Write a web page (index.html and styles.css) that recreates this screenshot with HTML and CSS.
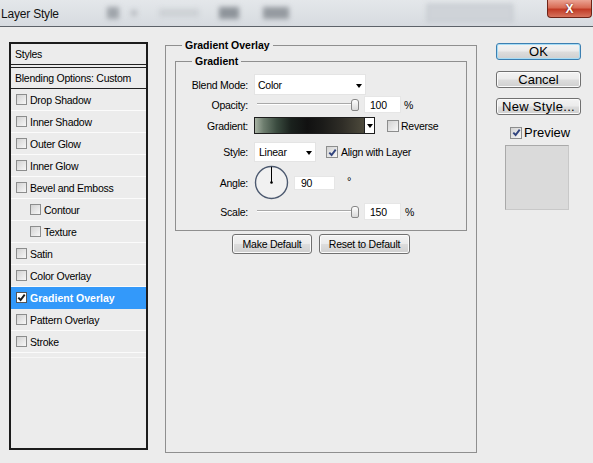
FILE: index.html
```html
<!DOCTYPE html>
<html>
<head>
<meta charset="utf-8">
<title>Layer Style</title>
<link rel="stylesheet" href="styles.css">
</head>
<body>
<div class="titlebar">
  <span class="title">Layer Style</span>
  <div class="ghost">
    <span class="g g1"></span>
    <span class="g g2"></span>
    <span class="g g3"></span>
    <span class="g g4"></span>
    <span class="g g5"></span>
    <span class="g g6"></span>
  </div>
  <div class="close">X</div>
</div>

<div class="dialog">
  <div class="styles">
    <div class="s-head">Styles</div>
    <div class="s-blend">Blending Options: Custom</div>
    <div class="item"><span class="cb"></span>Drop Shadow</div>
    <div class="item"><span class="cb"></span>Inner Shadow</div>
    <div class="item"><span class="cb"></span>Outer Glow</div>
    <div class="item"><span class="cb"></span>Inner Glow</div>
    <div class="item"><span class="cb"></span>Bevel and Emboss</div>
    <div class="item sub"><span class="cb"></span>Contour</div>
    <div class="item sub"><span class="cb"></span>Texture</div>
    <div class="item"><span class="cb"></span>Satin</div>
    <div class="item"><span class="cb"></span>Color Overlay</div>
    <div class="item sel"><span class="cb on"><svg viewBox="0 0 9 9"><path d="M1.3 4.6 L3.6 7 L7.7 1.6" /></svg></span>Gradient Overlay</div>
    <div class="item"><span class="cb"></span>Pattern Overlay</div>
    <div class="item"><span class="cb"></span>Stroke</div>
    <div class="item empty"></div>
  </div>

  <fieldset class="group main">
    <legend>Gradient Overlay</legend>
    <fieldset class="group inner">
      <legend>Gradient</legend>
      <div class="row r-blend">
        <span class="lbl">Blend Mode:</span>
        <span class="select sel-blend">Color<i class="arrow"></i></span>
      </div>
      <div class="row r-opacity">
        <span class="lbl">Opacity:</span>
        <span class="slider"><span class="track"></span><span class="thumb"></span></span>
        <span class="field">100</span>
        <span class="unit">%</span>
      </div>
      <div class="row r-grad">
        <span class="lbl">Gradient:</span>
        <span class="swatch"></span><span class="swatch-btn"><i class="arrow"></i></span>
        <span class="cb mid reverse"></span><span class="cbtext">Reverse</span>
      </div>
      <div class="row r-style">
        <span class="lbl">Style:</span>
        <span class="select sel-style">Linear<i class="arrow"></i></span>
        <span class="cb mid on align"><svg viewBox="0 0 9 9"><path d="M1.3 4.6 L3.6 7 L7.7 1.6" /></svg></span><span class="cbtext">Align with Layer</span>
      </div>
      <div class="row r-angle">
        <span class="lbl">Angle:</span>
        <svg class="dial" viewBox="0 0 35 35" width="35" height="35">
          <circle cx="17.5" cy="17.5" r="16" class="dial-ring"/>
          <line x1="17.5" y1="17.5" x2="17.5" y2="1.8" class="dial-hand"/>
          <circle cx="17.5" cy="17.5" r="1.3" class="dial-dot"/>
        </svg>
        <span class="field angle-field">90</span>
        <span class="unit deg">°</span>
      </div>
      <div class="row r-scale">
        <span class="lbl">Scale:</span>
        <span class="slider"><span class="track"></span><span class="thumb"></span></span>
        <span class="field">150</span>
        <span class="unit">%</span>
      </div>
    </fieldset>
    <div class="btnrow">
      <button class="btn b-make">Make Default</button>
      <button class="btn b-reset">Reset to Default</button>
    </div>
  </fieldset>

  <div class="actions">
    <button class="abtn ok">OK</button>
    <button class="abtn cancel">Cancel</button>
    <button class="abtn newstyle">New Style...</button>
    <div class="preview-row">
      <span class="cb mid on"><svg viewBox="0 0 9 9"><path d="M1.3 4.6 L3.6 7 L7.7 1.6" /></svg></span>
      <span class="preview-text">Preview</span>
    </div>
    <div class="preview-box"></div>
  </div>
</div>
</body>
</html>
```

FILE: styles.css
```css
* { box-sizing: border-box; }
html, body { margin: 0; padding: 0; }
body {
  width: 593px;
  height: 463px;
  overflow: hidden;
  background: #ececec;
  font-family: "Liberation Sans", Arial, sans-serif;
  font-size: 10.5px;
  letter-spacing: -0.25px;
  color: #000;
}

/* ---------- title bar ---------- */
.titlebar {
  height: 27px;
  display: flex;
  align-items: center;
  background: linear-gradient(#e4e7ea, #d7dbe0);
  border-bottom: 1px solid #5d6269;
  overflow: hidden;
}
.title {
  font-size: 12px;
  letter-spacing: -0.2px;
  margin-left: 1px;
  margin-top: 1px;
  color: #111;
  white-space: nowrap;
}
.ghost {
  display: flex;
  align-items: center;
  height: 100%;
  filter: blur(2.5px);
}
.g { display: block; height: 12px; background: #a3a8ae; }
.g1 { width: 12px; margin-left: 48px; background: #9fa4aa; }
.g2 { width: 6px; height: 6px; margin-left: 12px; background: #b8bcc1; }
.g3 { width: 40px; height: 8px; margin-left: 22px; background: #cdd1d5; }
.g4 { width: 20px; margin-left: 20px; background: #8e949a; }
.g5 { width: 26px; margin-left: 24px; background: #959aa0; }
.g6 { width: 86px; height: 18px; margin-left: 138px; background: #cfd3d8; border: 1px solid #b6bbc1; }
.close {
  margin-left: auto;
  margin-right: 1px;
  align-self: flex-start;
  width: 45px;
  height: 18px;
  border: 1px solid #6e2418;
  border-top: none;
  border-radius: 0 0 4px 4px;
  background: linear-gradient(#eba393, #d86b55 45%, #c13b26 55%, #d7735d);
  color: #fff;
  font: bold 12px "Liberation Sans", Arial, sans-serif;
  display: flex;
  align-items: center;
  justify-content: center;
  text-shadow: 0 0 2px #5a0c00;
}

/* ---------- layout ---------- */
.dialog {
  display: flex;
  align-items: flex-start;
}

/* ---------- styles list ---------- */
.styles {
  margin: 15px 0 0 9px;
  width: 139px;
  height: 408px;
  border: 2px solid #1c1c1c;
  display: flex;
  flex-direction: column;
  overflow: hidden;
}
.s-head {
  height: 21px;
  border-bottom: 1px solid #222;
  padding-left: 4px;
  display: flex;
  align-items: center;
}
.s-blend {
  margin-top: 2px;
  height: 22px;
  border-top: 1px solid #222;
  border-bottom: 1px solid #222;
  padding-left: 4px;
  display: flex;
  align-items: center;
}
.item {
  height: 22px;
  flex: none;
  display: flex;
  align-items: center;
  padding-left: 5px;
  border-bottom: 1px solid #fbfbfb;
  white-space: nowrap;
}
.item.sub { padding-left: 19px; }
.item.sel {
  background: #3399fa;
  color: #fff;
  font-weight: bold;
  letter-spacing: 0;
  border-bottom-color: #3399fa;
}
.item.empty { border-bottom-color: #f6f6f6; height: 5px; }

.cb {
  flex: none;
  width: 11px;
  height: 11px;
  margin-right: 3px;
  border: 1px solid #8c8d8d;
  background: linear-gradient(135deg, #d2d2d2, #f7f7f7);
  display: inline-flex;
  align-items: center;
  justify-content: center;
}
.cb svg { width: 9px; height: 9px; }
.cb svg path { fill: none; stroke: #2c3550; stroke-width: 1.9; }
.item.sel .cb { background: #fff; border-color: #555; }
.item.sel .cb svg path { stroke: #1a1a1a; }
.cb.mid { width: 12px; height: 12px; }
.cb.mid svg path { stroke: #31447e; }

/* ---------- group boxes ---------- */
fieldset {
  margin: 0;
  padding: 0;
  min-width: 0;
  border: 1px solid #8f8f8f;
}
legend {
  padding: 0 3px;
  margin-left: 16px;
  font-weight: bold;
  line-height: 12px;
  letter-spacing: 0;
}
.main {
  margin: 12px 0 0 17px;
  width: 312px;
  height: 414px;
}
.inner {
  margin: 4px 9px 0;
  padding: 7px 0 10px;
}

.row {
  display: flex;
  align-items: center;
}
.lbl {
  flex: none;
  width: 72px;
  margin-right: 6px;
  text-align: right;
  white-space: nowrap;
}
.r-blend { height: 21px; }
.r-opacity { height: 17px; margin-top: 1px; }
.r-grad { height: 17px; margin-top: 4px; }
.r-style { height: 20px; margin-top: 8px; }
.r-angle { height: 35px; margin-top: 3px; }
.r-scale { height: 17px; margin-top: 3px; }

.select {
  position: relative;
  height: 100%;
  background: #fff;
  border: 1px solid #e4e4e4;
  display: flex;
  align-items: center;
  padding-left: 3px;
}
.sel-blend { width: 112px; }
.sel-style { width: 62px; padding-left: 4px; }
.arrow {
  display: block;
  width: 0;
  height: 0;
  border-left: 3.5px solid transparent;
  border-right: 3.5px solid transparent;
  border-top: 4px solid #000;
}
.select .arrow { position: absolute; right: 3px; top: 50%; margin-top: -1px; }

.slider {
  position: relative;
  flex: none;
  width: 106px;
  height: 17px;
}
.track {
  position: absolute;
  left: 3px;
  top: 7px;
  width: 96px;
  height: 2px;
  border-top: 1px solid #a9a9a9;
  border-bottom: 1px solid #fff;
}
.thumb {
  position: absolute;
  left: 97px;
  top: 3px;
  width: 8px;
  height: 12px;
  border: 1px solid #868686;
  border-radius: 3px 3px 2px 2px;
  background: linear-gradient(#fdfdfd, #d9d9d9);
}
.field {
  flex: none;
  height: 17px;
  width: 37px;
  margin-left: 4px;
  padding-left: 5px;
  background: #fff;
  border: 1px solid #e6e6e6;
  display: flex;
  align-items: center;
}
.unit { margin-left: 3px; }
.r-scale .unit { margin-left: 4px; }

.swatch {
  flex: none;
  width: 110px;
  height: 17px;
  border: 1px solid #1e1e1e;
  border-right: none;
  background: linear-gradient(to right, #a7b2a3 0%, #6d7d6e 8%, #3a4b3f 20%, #1a211d 33%, #111 48%, #1b1b19 62%, #2f2d27 80%, #4d4a3c 100%);
}
.swatch-btn {
  flex: none;
  width: 11px;
  height: 17px;
  border: 1px solid #1e1e1e;
  background: #fff;
  display: flex;
  align-items: center;
  justify-content: center;
}
.swatch-btn .arrow { border-left-width: 3px; border-right-width: 3px; border-top-width: 4px; }
.reverse { margin-left: 12px; margin-right: 2px; }
.align { margin-left: 10px; margin-right: 3px; }
.cbtext { white-space: nowrap; }

.dial { flex: none; margin-left: 0; }
.dial-ring { fill: #f1f1f1; stroke: #4d5a70; stroke-width: 1.4; }
.dial-hand { stroke: #000; stroke-width: 1; }
.dial-dot { fill: #000; }
.angle-field { width: 41px; height: 14px; margin-left: 5px; padding-left: 6px; }
.deg { margin-left: 12px; align-self: flex-start; margin-top: 10px; font-size: 11px; }

.btnrow {
  display: flex;
  justify-content: center;
  gap: 7px;
  margin-top: 3px;
}
.btn, .abtn {
  font-family: "Liberation Sans", Arial, sans-serif;
  color: #000;
  padding: 0;
  border: 1px solid #707070;
  border-radius: 3px;
  background: linear-gradient(#f3f3f3, #ebebeb 48%, #dddddd 52%, #cfcfcf);
  box-shadow: inset 0 0 0 1px #fbfbfb;
}
.btn {
  height: 20px;
  font-size: 10.5px;
  letter-spacing: -0.25px;
}
.b-make { width: 80px; }
.b-reset { width: 91px; }

/* ---------- action column ---------- */
.actions {
  margin: 16px 0 0 19px;
  width: 85px;
  display: flex;
  flex-direction: column;
}
.abtn {
  height: 17px;
  font-size: 13px;
  letter-spacing: 0;
  line-height: 14px;
}
.ok {
  border-color: #3c7fb1;
  box-shadow: inset 0 0 0 1px #a6dcf5;
}
.cancel { margin-top: 11px; }
.newstyle { margin-top: 10px; letter-spacing: 0.3px; }
.preview-row {
  margin-top: 9px;
  height: 17px;
  display: flex;
  align-items: center;
  padding-left: 14px;
}
.preview-row .cb { margin-right: 2px; }
.preview-text { font-size: 13px; letter-spacing: 0; }
.preview-box {
  margin: 4px 0 0 9px;
  width: 64px;
  height: 65px;
  background: #dadada;
  border: 1px solid #a9a9a9;
  border-right-color: #c8c8c8;
  border-bottom-color: #c8c8c8;
}
```
